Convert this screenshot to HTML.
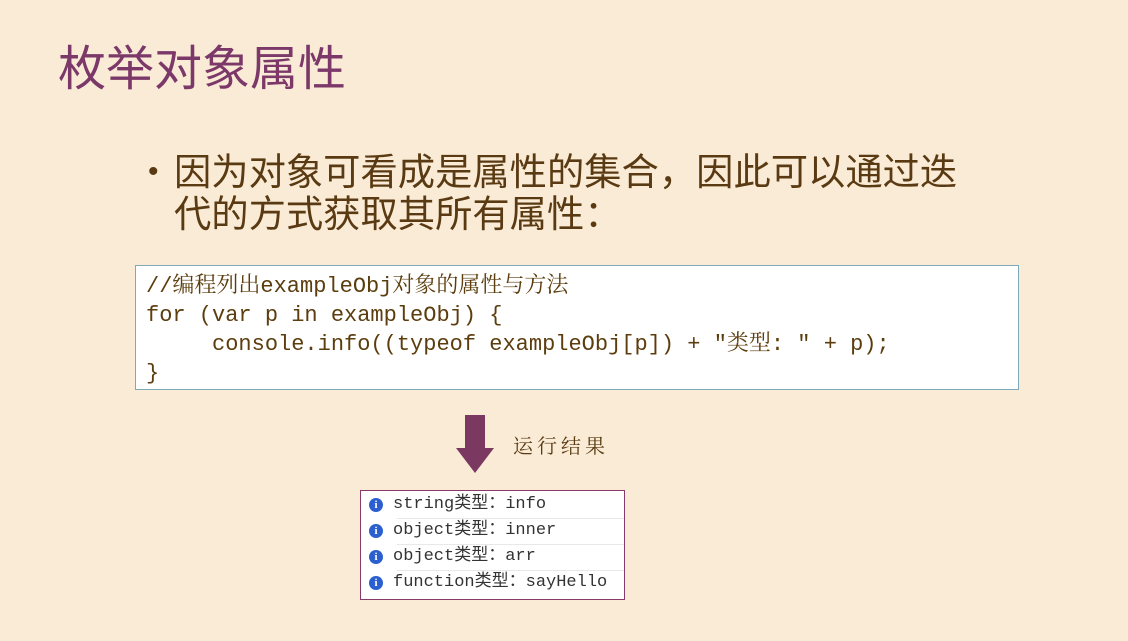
<!DOCTYPE html>
<html><head><meta charset="utf-8"><style>
body{margin:0;width:1128px;height:641px;overflow:hidden;background:#f9ebd6;position:relative;font-family:"Liberation Sans","Noto Sans CJK SC",sans-serif}
.t{position:absolute;left:58px;top:40px;font-size:48px;line-height:60px;color:#7b3868;white-space:nowrap}
.b{position:absolute;left:174px;top:151px;font-size:37.3px;line-height:42px;color:#5a3a12;white-space:nowrap}
.dot{position:absolute;left:148px;top:151px;font-size:30px;line-height:42px;color:#5a3a12}
.code{position:absolute;left:135px;top:265px;width:884px;height:125px;background:#fff;border:1px solid #7fa8b8;box-sizing:border-box}
.code div{position:absolute;left:10px;font-family:"Liberation Mono","Noto Serif CJK SC",monospace;font-size:22px;color:#5c3d0e;white-space:pre;line-height:29px}
.arrow{position:absolute;left:456px;top:415px}
.res{position:absolute;left:513px;top:430px;font-family:"Noto Serif CJK SC",serif;font-size:20px;letter-spacing:4px;color:#5a3a12}
.con{position:absolute;left:360px;top:490px;width:265px;height:110px;background:#fff;border:1px solid #8a3a6a;box-sizing:border-box}
.row{position:absolute;left:0;width:263px;height:26px;font-family:"Liberation Mono","Noto Sans CJK SC",monospace;font-size:17px;color:#333;line-height:26px}
.row span.i{position:absolute;left:8px;top:6px;width:14px;height:14px;border-radius:50%;background:#2b5fd0;color:#fff;font:bold 11px/14px "Liberation Serif",serif;text-align:center}
.row span.x{position:absolute;left:32px}
.line{position:absolute;left:36px;right:0;height:1px;background:#e8e8e8}
</style></head><body>
<div class="t">枚举对象属性</div>
<div class="dot">•</div>
<div class="b">因为对象可看成是属性的集合，因此可以通过迭<br>代的方式获取其所有属性：</div>
<div class="code">
<div style="top:6px">//编程列出exampleObj对象的属性与方法</div>
<div style="top:35px">for (var p in exampleObj) {</div>
<div style="top:64px">     console.info((typeof exampleObj[p]) + "类型: " + p);</div>
<div style="top:93px">}</div>
</div>
<svg class="arrow" width="38" height="58"><path d="M9 0H29V33H38L19 58L0 33H9Z" fill="#7b3860"/></svg>
<div class="res">运行结果</div>
<div class="con">
<div class="row" style="top:1px"><span class="i">i</span><span class="x">string类型：info</span></div>
<div class="line" style="top:27px"></div>
<div class="row" style="top:27px"><span class="i">i</span><span class="x">object类型：inner</span></div>
<div class="line" style="top:53px"></div>
<div class="row" style="top:53px"><span class="i">i</span><span class="x">object类型：arr</span></div>
<div class="line" style="top:79px"></div>
<div class="row" style="top:79px"><span class="i">i</span><span class="x">function类型：sayHello</span></div>
</div>
</body></html>
